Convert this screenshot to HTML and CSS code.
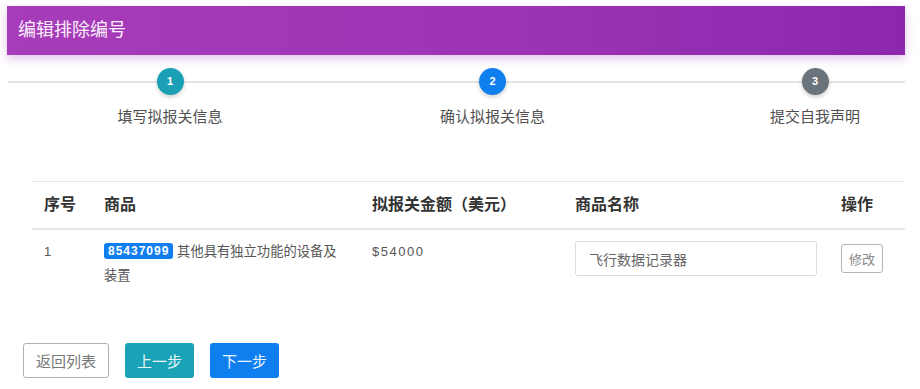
FILE: index.html
```html
<!DOCTYPE html>
<html lang="zh-CN">

<head>
    <meta charset="UTF-8">
    <meta name="viewport" content="width=device-width, initial-scale=1.0">
    <title>编辑排除编号</title>
    <link rel="stylesheet" href="styles.css">
</head>

<body>
    <div class="page">
        <!-- Title bar -->
        <div class="title-bar">编辑排除编号</div>

        <!-- Steps -->
        <div class="stepper">
            <div class="step">
                <span class="step-num done">1</span>
                <span class="step-label">填写拟报关信息</span>
            </div>
            <div class="step">
                <span class="step-num current">2</span>
                <span class="step-label">确认拟报关信息</span>
            </div>
            <div class="step">
                <span class="step-num todo">3</span>
                <span class="step-label">提交自我声明</span>
            </div>
        </div>

        <!-- Goods table -->
        <table class="goods">
            <thead>
                <tr>
                    <th class="col-no">序号</th>
                    <th class="col-goods">商品</th>
                    <th class="col-amount">拟报关金额（美元）</th>
                    <th class="col-name">商品名称</th>
                    <th class="col-op">操作</th>
                </tr>
            </thead>
            <tbody>
                <tr>
                    <td>1</td>
                    <td>
                        <div class="goods-desc"><span class="code-badge">85437099</span> 其他具有独立功能的设备及装置</div>
                    </td>
                    <td class="amount">$54000</td>
                    <td><input class="name-input" type="text" value="飞行数据记录器"></td>
                    <td><button class="btn-edit">修改</button></td>
                </tr>
            </tbody>
        </table>

        <!-- Actions -->
        <div class="actions">
            <button class="btn btn-outline">返回列表</button>
            <button class="btn btn-teal">上一步</button>
            <button class="btn btn-blue">下一步</button>
        </div>
    </div>
</body>

</html>
```

FILE: styles.css
```css
body {
    margin: 0;
    background-color: #fff;
    font-family: "Liberation Sans", "Noto Sans CJK SC", sans-serif;
    color: #555;
}

.page {
    padding: 6px 15px 0 7px;
}

.title-bar {
    height: 49px;
    line-height: 49px;
    padding-left: 11px;
    font-size: 18px;
    color: #fbeefc;
    background: linear-gradient(90deg, #a73cba 0%, #9c34b5 55%, #8c27ad 100%);
    box-shadow: 0 4px 9px rgba(170, 60, 190, 0.3);
}

/* Steps with the line behind the numbers */
.stepper {
    display: flex;
    justify-content: space-between;
    margin-top: 13px;
    padding: 0 10px 0 83px;
    background: linear-gradient(#e3e3e3, #e3e3e3) no-repeat 1px 13px / 100% 2px;
}

.step {
    width: 160px;
    display: flex;
    flex-direction: column;
    align-items: center;
}

.step-num {
    width: 27px;
    height: 27px;
    border-radius: 50%;
    color: #fff;
    font-size: 11px;
    font-weight: bold;
    line-height: 27px;
    text-align: center;
    box-shadow: 0 2px 4px rgba(0, 0, 0, 0.2);
}

.step-num.done {
    background-color: #1a9fb4;
}

.step-num.current {
    background-color: #0f7ff0;
}

.step-num.todo {
    background-color: #6b737b;
}

.step-label {
    margin-top: 12px;
    font-size: 15px;
    line-height: 20px;
    color: #505050;
}

/* Table */
.goods {
    width: 873px;
    margin: 54px 0 0 25px;
    border-collapse: collapse;
    font-size: 13px;
}

.goods th {
    padding: 12px 12px;
    border-top: 1px solid #e4e6e8;
    border-bottom: 2px solid #e4e6e8;
    text-align: left;
    font-size: 16px;
    line-height: 22px;
    color: #333;
}

.goods td {
    padding: 10px 12px;
    vertical-align: top;
    line-height: 24px;
    color: #555;
}

.col-no {
    width: 36px;
}

.col-goods {
    width: 244px;
}

.col-amount {
    width: 179px;
}

.col-name {
    width: 241px;
}

.goods-desc {
    width: 240px;
    font-size: 13.3px;
}

.code-badge {
    display: inline-block;
    padding: 0 4px;
    border-radius: 3px;
    background-color: #0f7ff0;
    color: #fff;
    font-size: 12px;
    font-weight: bold;
    letter-spacing: 1px;
    line-height: 16px;
    vertical-align: 1px;
}

.amount {
    letter-spacing: 1.5px;
    color: #666;
}

.name-input {
    box-sizing: border-box;
    width: 242px;
    height: 35px;
    margin-top: 1px;
    padding: 0 13px;
    border: 1px solid #dcdcdc;
    border-radius: 3px;
    font-family: inherit;
    font-size: 14px;
    color: #666;
}

.btn-edit {
    margin-top: 4px;
    height: 29px;
    padding: 0 7px;
    border: 1px solid #b5b5b5;
    border-radius: 3px;
    background-color: #fff;
    font-family: inherit;
    font-size: 13px;
    color: #888;
}

/* Bottom buttons */
.actions {
    display: flex;
    gap: 16px;
    margin: 45px 0 0 16px;
}

.btn {
    height: 35px;
    padding: 0 12px;
    border-radius: 3px;
    font-family: inherit;
    font-size: 15px;
    border: 1px solid transparent;
}

.btn-outline {
    border-color: #b0b0b0;
    background-color: #fff;
    color: #777;
}

.btn-teal {
    padding: 0 11px;
    background-color: #1aa3b6;
    color: #e8f7f9;
}

.btn-blue {
    padding: 0 11px;
    background-color: #0f7ff0;
    color: #eaf3ff;
}
```
